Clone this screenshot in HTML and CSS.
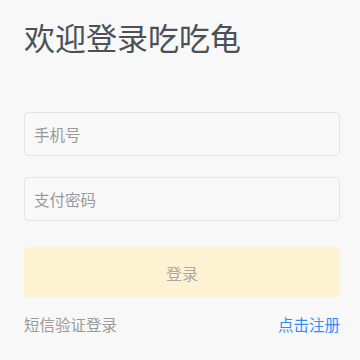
FILE: index.html
```html
<!DOCTYPE html>
<html lang="zh-CN">
<head>
<meta charset="utf-8">
<link rel="stylesheet" href="styles.css">
</head>
<body>
<div class="page">
  <h1 class="title">欢迎登录吃吃龟</h1>
  <div class="form">
    <div class="field"><input class="input" type="text" placeholder="手机号"></div>
    <div class="field"><input class="input" type="password" placeholder="支付密码"></div>
    <button class="btn">登录</button>
    <div class="links">
      <span class="link-sms">短信验证登录</span>
      <span class="link-reg">点击注册</span>
    </div>
  </div>
</div>
</body>
</html>
```
FILE: styles.css
```css
html, body {
  margin: 0;
  padding: 0;
  background: #f8f8f8;
  font-family: "Noto Sans CJK SC", "Noto Sans", sans-serif;
}
.page {
  padding: 15px 20px 0 24px;
}
.title {
  margin: 0;
  font-size: 31px;
  font-weight: 400;
  line-height: 44px;
  color: #4b5059;
}
.form {
  margin-top: 53px;
  display: flex;
  flex-direction: column;
}
.field {
  margin-bottom: 21px;
}
.input {
  box-sizing: border-box;
  width: 100%;
  height: 44px;
  border: 1px solid #e4e4e4;
  border-radius: 4px;
  background: #f8f8f8;
  padding: 0 9px;
  font-family: inherit;
  font-size: 15.5px;
  color: #333;
  outline: none;
}
.input::placeholder {
  color: #9a9a9a;
}
.btn {
  margin-top: 5px;
  height: 51px;
  border: none;
  border-radius: 5px;
  background: #fdf3d2;
  color: #a8a8a8;
  font-family: inherit;
  font-size: 16px;
}
.links {
  margin-top: 14px;
  display: flex;
  justify-content: space-between;
  font-size: 15.5px;
  line-height: 24px;
}
.link-sms {
  color: #9a9a9a;
}
.link-reg {
  color: #2e8ef5;
}
```
